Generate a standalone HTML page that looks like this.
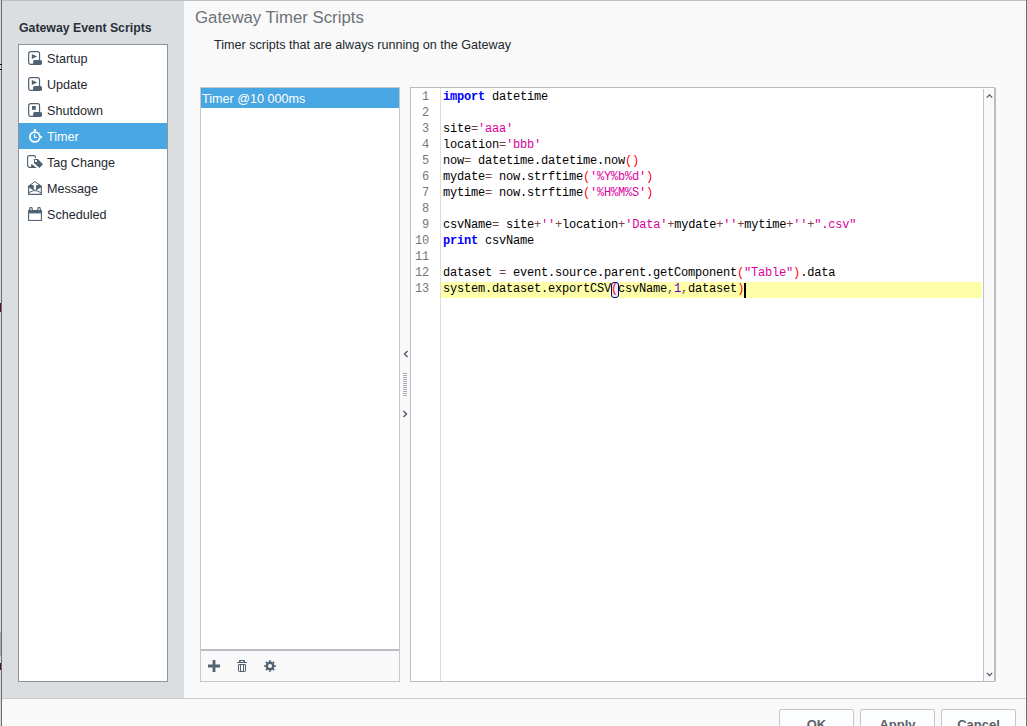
<!DOCTYPE html>
<html><head><meta charset="utf-8">
<style>
html,body{margin:0;padding:0;}
body{width:1027px;height:726px;position:relative;overflow:hidden;background:#f9f9f9;font-family:"Liberation Sans",sans-serif;}
.a{position:absolute;}
.t{position:absolute;white-space:nowrap;}
#leftpanel{left:2px;top:1px;width:182px;height:697px;background:#dadee1;}
#topline{left:0;top:0;width:1027px;height:1px;background:#bcc1c6;}
#lb0{left:0;top:0;width:1px;height:726px;background:#d6d6d6;}
#lb1{left:1px;top:0;width:1px;height:726px;background:#6e6e6e;}
#rb0{left:1025px;top:1px;width:1px;height:726px;background:#ffffff;}
#rb1{left:1026px;top:0;width:1px;height:726px;background:#6e6e6e;}
#botsep{left:2px;top:698px;width:1024px;height:1px;background:#c6cace;}
#ltitle{left:19px;top:18px;line-height:20px;font-size:12.3px;font-weight:bold;color:#2b3038;}
#list{left:18px;top:44px;width:148px;height:636px;border:1px solid #8f9499;background:#fff;}
.row{position:absolute;left:0;width:148px;height:26px;}
.row .lbl{position:absolute;left:28px;top:1px;line-height:26px;font-size:12.6px;color:#1e2730;white-space:nowrap;}
.row svg{position:absolute;left:9px;top:6px;}
.sel{background:#48a6e2;}
.sel .lbl{color:#fff;}
#rtitle{left:195px;top:6px;line-height:24px;font-size:16.8px;color:#6d7378;}
#sub{left:214px;top:35px;line-height:20px;font-size:12.6px;color:#23282d;}
#slist{left:200px;top:87px;width:198px;height:593px;border:1px solid #c3c7cb;background:#fff;}
#ssel{left:0;top:0;width:198px;height:20px;background:#48a6e2;}
#ssel span{position:absolute;left:1px;top:1px;line-height:20px;font-size:12.6px;color:#fff;white-space:nowrap;}
#tbar{left:0;top:561px;width:198px;height:30px;background:#f9f9f9;border-top:2px solid #b9bfc5;}
#editor{left:410px;top:87px;width:583px;height:593px;border:1px solid #b8bdc2;border-right:2px solid #b8bdc2;border-radius:0 2px 2px 0;background:#fff;}
#gutline{left:29px;top:0;width:1px;height:593px;background:#dddddd;}
#sbar{left:572px;top:1px;width:10px;height:592px;background:#f9f9f9;border-left:1px solid #c0c4c8;}
#hl{left:30px;top:194px;width:541px;height:16px;background:#ffffaa;}
.code{position:absolute;left:32px;top:1px;font-family:"Liberation Mono",monospace;font-size:12px;letter-spacing:-0.2px;line-height:16px;white-space:pre;color:#000;}
.nums{position:absolute;left:0;top:1px;width:18px;text-align:right;font-family:"Liberation Mono",monospace;font-size:12px;letter-spacing:-0.2px;line-height:16px;white-space:pre;color:#787878;}
.kw{color:#0000ff;font-weight:bold;}
.st{color:#dc009c;}
.op{color:#804040;}
.sp{color:#ff0000;}
.nu{color:#6400c8;}
#caret{left:333px;top:195px;width:2px;height:15px;background:#000;}
#bm{left:200px;top:194px;width:6px;height:14px;border:1px solid #000080;border-radius:3px;background:#eaeaff;}
.btn{position:absolute;top:709px;height:30px;border:1px solid #c3c7cb;border-radius:2px;background:#fcfdfe;}
.btn span{position:absolute;left:0;right:0;top:7px;text-align:center;font-size:13px;font-weight:bold;color:#5a6066;}
</style></head><body>
<div class="a" id="leftpanel"></div>
<div class="a" id="topline"></div>
<div class="a" id="lb0"></div>
<div class="a" id="lb1"></div>
<div class="a" id="rb0"></div>
<div class="a" id="rb1"></div>
<div class="a" id="botsep"></div>
<div class="a" style="left:0;top:64px;width:2px;height:1px;background:#111;"></div>
<div class="a" style="left:0;top:69px;width:2px;height:1px;background:#111;"></div>
<div class="a" style="left:0;top:303px;width:1px;height:9px;background:#5a0a35;"></div>
<div class="a" style="left:0;top:632px;width:1px;height:24px;background:#a8a8a8;"></div>
<div class="a" style="left:0;top:663px;width:1px;height:7px;background:#5a0a35;"></div>


<div class="t" id="ltitle">Gateway Event Scripts</div>
<div class="a" id="list">
  <div class="row" style="top:0px">
    <svg width="15" height="15" viewBox="0 0 15 15"><rect x="0.65" y="0.65" width="10.9" height="12.7" rx="2" fill="none" stroke="#506273" stroke-width="1.2"/><rect x="5.1" y="9" width="8.9" height="4.9" rx="1.6" fill="#506273"/><path d="M3.8 2.9 L9.1 5.45 L3.8 8 Z" fill="#506273"/></svg>
    <span class="lbl">Startup</span></div>
  <div class="row" style="top:26px">
    <svg width="15" height="15" viewBox="0 0 15 15"><rect x="0.65" y="0.65" width="10.9" height="12.7" rx="2" fill="none" stroke="#506273" stroke-width="1.2"/><rect x="5.1" y="9" width="8.9" height="4.9" rx="1.6" fill="#506273"/><path d="M3.8 2.9 L9.1 5.45 L3.8 8 Z" fill="#506273"/></svg>
    <span class="lbl">Update</span></div>
  <div class="row" style="top:52px">
    <svg width="15" height="15" viewBox="0 0 15 15"><rect x="0.65" y="0.65" width="10.9" height="12.7" rx="2" fill="none" stroke="#506273" stroke-width="1.2"/><rect x="5.1" y="9" width="8.9" height="4.9" rx="1.6" fill="#506273"/><rect x="4" y="3" width="3.8" height="3.8" fill="#506273"/></svg>
    <span class="lbl">Shutdown</span></div>
  <div class="row sel" style="top:78px">
    <svg width="15" height="15" viewBox="0 0 15 15"><circle cx="6.9" cy="8" r="4.95" fill="none" stroke="#fff" stroke-width="1.8"/><rect x="5.85" y="0" width="2.2" height="2.6" fill="#fff"/><rect x="12.1" y="7" width="1.9" height="2.1" fill="#fff"/><path d="M6.45 5.3 V8.35 H9" fill="none" stroke="#fff" stroke-width="1.1"/></svg>
    <span class="lbl">Timer</span></div>
  <div class="row" style="top:104px">
    <svg width="17" height="15" viewBox="0 0 17 15" style="left:8px"><path d="M8.4 2.9 V2 a1.4 1.4 0 0 0 -1.4 -1.4 H2 a1.4 1.4 0 0 0 -1.4 1.4 V9.9 a2.6 2.6 0 0 0 2.6 2.6 H4" fill="none" stroke="#506273" stroke-width="1.15"/><path d="M3.6 13.1 L4.4 8.7 L9.8 13.1 Z" fill="#506273"/><path d="M6.9 3.9 H10.9 L16 9.2 L12.4 12.9 L6.9 7.9 Z M7.9 4.9 V6.9 H9.9 V4.9 Z" fill="#506273" fill-rule="evenodd"/></svg>
    <span class="lbl">Tag Change</span></div>
  <div class="row" style="top:130px">
    <svg width="15" height="15" viewBox="0 0 15 15"><path d="M0.6 5 V13.35 H13.35 V5" fill="none" stroke="#506273" stroke-width="1.15"/><path d="M0.3 5.3 L6.9 0.6 L13.6 5.3" fill="none" stroke="#506273" stroke-width="1"/><path d="M0.2 5.1 L2.8 3.5 L5.8 4.4 V9.4 L1 6.6 Z M13.6 5.1 L11 3.5 L8 4.4 V9.4 L12.8 6.6 Z" fill="#506273"/><rect x="6" y="8.2" width="1.8" height="1.2" fill="#a9b3bd"/><path d="M0.9 11.6 L5.4 9.7 H8.4 L12.9 11.6" fill="none" stroke="#506273" stroke-width="1"/></svg>
    <span class="lbl">Message</span></div>
  <div class="row" style="top:156px">
    <svg width="14" height="14" viewBox="0 0 14 14"><rect x="0.6" y="3.6" width="12.8" height="9.9" fill="none" stroke="#506273" stroke-width="1.1"/><rect x="0" y="3" width="14" height="3.4" fill="#506273"/><path d="M0.9 4 L1.3 1.1 Q1.5 0.1 2.4 0.1 H3.5 Q4.4 0.1 4.6 1.1 L5 4 Z M9 4 L9.4 1.1 Q9.6 0.1 10.5 0.1 H11.6 Q12.5 0.1 12.7 1.1 L13.1 4 Z" fill="#506273"/><rect x="2.1" y="1.2" width="1.8" height="2" fill="#c6ced6"/><rect x="10.2" y="1.2" width="1.8" height="2" fill="#c6ced6"/></svg>
    <span class="lbl">Scheduled</span></div>
</div>

<div class="t" id="rtitle">Gateway Timer Scripts</div>
<div class="t" id="sub">Timer scripts that are always running on the Gateway</div>

<div class="a" id="slist">
  <div class="a" id="ssel"><span>Timer @10 000ms</span></div>
  <div class="a" id="tbar">
    <svg class="a" style="left:7px;top:9px" width="12" height="12" viewBox="0 0 12 12"><path d="M4.6 0 H7.4 V4.6 H12 V7.4 H7.4 V12 H4.6 V7.4 H0 V4.6 H4.6 Z" fill="#526273"/></svg>
    <svg class="a" style="left:36px;top:8px" width="10" height="14" viewBox="0 0 10 14"><path d="M2 1 H8 V3 H6.3 V2 H3.7 V3 H2 Z" fill="#526273"/><rect x="0" y="3" width="10" height="1" fill="#526273"/><path d="M1.5 5.5 V11.8 Q1.5 12.5 2.2 12.5 H7.8 Q8.5 12.5 8.5 11.8 V5.5 Z M3.5 5.5 V12.5 M6.5 5.5 V12.5" fill="none" stroke="#526273" stroke-width="1"/></svg>
    <svg class="a" style="left:63px;top:9px" width="12" height="12" viewBox="0 0 12 12"><path d="M5.23 1.57 L5.34 0.04 L6.66 0.04 L6.77 1.57 L8.59 2.32 L9.75 1.32 L10.68 2.25 L9.68 3.41 L10.43 5.23 L11.96 5.34 L11.96 6.66 L10.43 6.77 L9.68 8.59 L10.68 9.75 L9.75 10.68 L8.59 9.68 L6.77 10.43 L6.66 11.96 L5.34 11.96 L5.23 10.43 L3.41 9.68 L2.25 10.68 L1.32 9.75 L2.32 8.59 L1.57 6.77 L0.04 6.66 L0.04 5.34 L1.57 5.23 L2.32 3.41 L1.32 2.25 L2.25 1.32 L3.41 2.32 Z M6.00 4.00 A2 2 0 1 0 6.00 8.00 A2 2 0 1 0 6.00 4.00 Z" fill="#526273" fill-rule="evenodd"/></svg>
  </div>
</div>

<!-- splitter -->
<svg class="a" style="left:403px;top:350px" width="6" height="8" viewBox="0 0 6 8"><path d="M4.5 1 L1.5 4 L4.5 7" fill="none" stroke="#526273" stroke-width="1.5"/></svg>
<svg class="a" style="left:403px;top:372px" width="5" height="25" viewBox="0 0 5 25"><path d="M0 1.5 H4 M0 3.5 H4 M0 5.5 H4 M0 7.5 H4 M0 9.5 H4 M0 11.5 H4 M0 13.5 H4 M0 15.5 H4 M0 17.5 H4 M0 19.5 H4 M0 21.5 H4 M0 23.5 H4" stroke="#a4acb4" stroke-width="1"/></svg>
<svg class="a" style="left:402px;top:410px" width="6" height="8" viewBox="0 0 6 8"><path d="M1.5 1 L4.5 4 L1.5 7" fill="none" stroke="#526273" stroke-width="1.5"/></svg>

<div class="a" id="editor">
  <div class="a" id="gutline"></div>
  <div class="a" id="hl"></div>
  <div class="a" id="bm"></div>
  <div class="nums">1
2
3
4
5
6
7
8
9
10
11
12
13</div>
<div class="code"><span class="kw">import</span> datetime

site<span class="op">=</span><span class="st">'aaa'</span>
location<span class="op">=</span><span class="st">'bbb'</span>
now<span class="op">=</span> datetime.datetime.now<span class="sp">()</span>
mydate<span class="op">=</span> now.strftime<span class="sp">(</span><span class="st">'%Y%b%d'</span><span class="sp">)</span>
mytime<span class="op">=</span> now.strftime<span class="sp">(</span><span class="st">'%H%M%S'</span><span class="sp">)</span>

csvName<span class="op">=</span> site<span class="op">+</span><span class="st">''</span><span class="op">+</span>location<span class="op">+</span><span class="st">'Data'</span><span class="op">+</span>mydate<span class="op">+</span><span class="st">''</span><span class="op">+</span>mytime<span class="op">+</span><span class="st">''</span><span class="op">+</span><span class="st">".csv"</span>
<span class="kw">print</span> csvName

dataset <span class="op">=</span> event.source.parent.getComponent<span class="sp">(</span><span class="st">"Table"</span><span class="sp">)</span>.data
system.dataset.exportCSV<span class="sp">(</span>csvName<span class="op">,</span><span class="nu">1</span><span class="op">,</span>dataset<span class="sp">)</span></div>
  <div class="a" id="caret"></div>
  <div class="a" id="sbar">
    <svg class="a" style="left:2px;top:5px" width="7" height="5" viewBox="0 0 7 5"><path d="M0.8 3.6 L3.5 0.9 L6.2 3.6" fill="none" stroke="#4a5a6a" stroke-width="1.3"/></svg>
    <svg class="a" style="left:2px;top:583px" width="7" height="5" viewBox="0 0 7 5"><path d="M0.8 0.9 L3.5 3.6 L6.2 0.9" fill="none" stroke="#4a5a6a" stroke-width="1.3"/></svg>
  </div>
</div>

<div class="btn" style="left:779px;width:73px;"><span>OK</span></div>
<div class="btn" style="left:860px;width:73px;"><span>Apply</span></div>
<div class="btn" style="left:941px;width:73px;"><span>Cancel</span></div>
</body></html>
